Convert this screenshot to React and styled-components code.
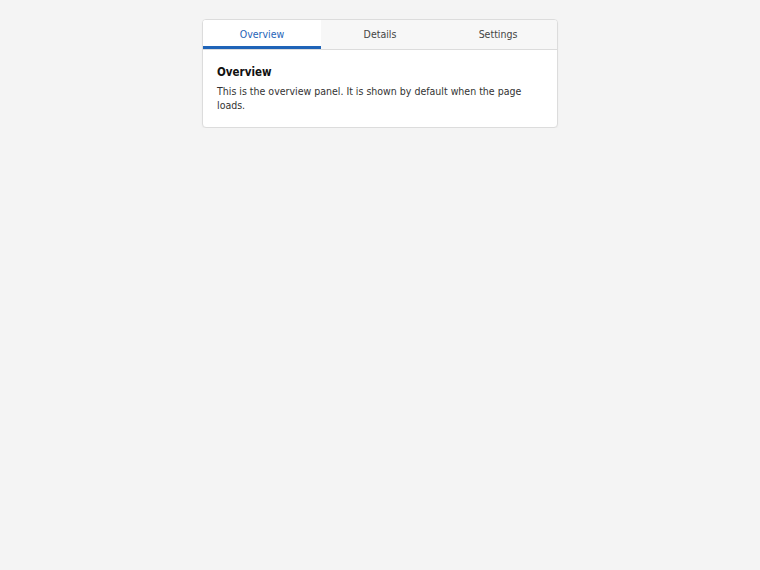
import React, { useState } from "react";
import styled, { createGlobalStyle } from "styled-components";

const GlobalStyle = createGlobalStyle`
  body {
    margin: 0;
    background: #f4f4f4;
    font-family: "DejaVu Sans Condensed", "DejaVu Sans", Verdana, sans-serif;
    color: #333;
  }
`;

const Page = styled.div`
  padding-top: 19px;
  display: flex;
  justify-content: center;
`;

const Card = styled.div`
  width: 356px;
  box-sizing: border-box;
  background: #fff;
  border: 1px solid #dcdcdc;
  border-radius: 4px;
  box-shadow: 0 1px 2px rgba(0, 0, 0, 0.04);
  overflow: hidden;
`;

const TabList = styled.div`
  display: flex;
  background: #f7f7f7;
  border-bottom: 1px solid #dcdcdc;
`;

const Tab = styled.button`
  flex: 1;
  height: 29px;
  padding: 1px 0 0;
  border: none;
  border-bottom: 3px solid ${(p) => (p.$active ? "#1f64b8" : "transparent")};
  background: ${(p) => (p.$active ? "#fff" : "transparent")};
  color: ${(p) => (p.$active ? "#1f64b8" : "#444")};
  font-family: inherit;
  font-size: 10.5px;
  cursor: pointer;
`;

const Panel = styled.div`
  padding: 15px 14px 15px;
`;

const Heading = styled.h2`
  margin: 0 0 5px;
  font-size: 11.5px;
  font-weight: bold;
  color: #111;
`;

const Text = styled.p`
  margin: 0;
  font-size: 10.5px;
  line-height: 14px;
  color: #333;
`;

const tabs = [
  { id: "overview", label: "Overview", title: "Overview", body: "This is the overview panel. It is shown by default when the page loads." },
  { id: "details", label: "Details", title: "Details", body: "This is the details panel." },
  { id: "settings", label: "Settings", title: "Settings", body: "This is the settings panel." },
];

export default function App() {
  const [active, setActive] = useState("overview");
  const current = tabs.find((t) => t.id === active);
  return (
    <Page>
      <GlobalStyle />
      <Card>
        <TabList>
          {tabs.map((t) => (
            <Tab key={t.id} $active={t.id === active} onClick={() => setActive(t.id)}>
              {t.label}
            </Tab>
          ))}
        </TabList>
        <Panel>
          <Heading>{current.title}</Heading>
          <Text>{current.body}</Text>
        </Panel>
      </Card>
    </Page>
  );
}
